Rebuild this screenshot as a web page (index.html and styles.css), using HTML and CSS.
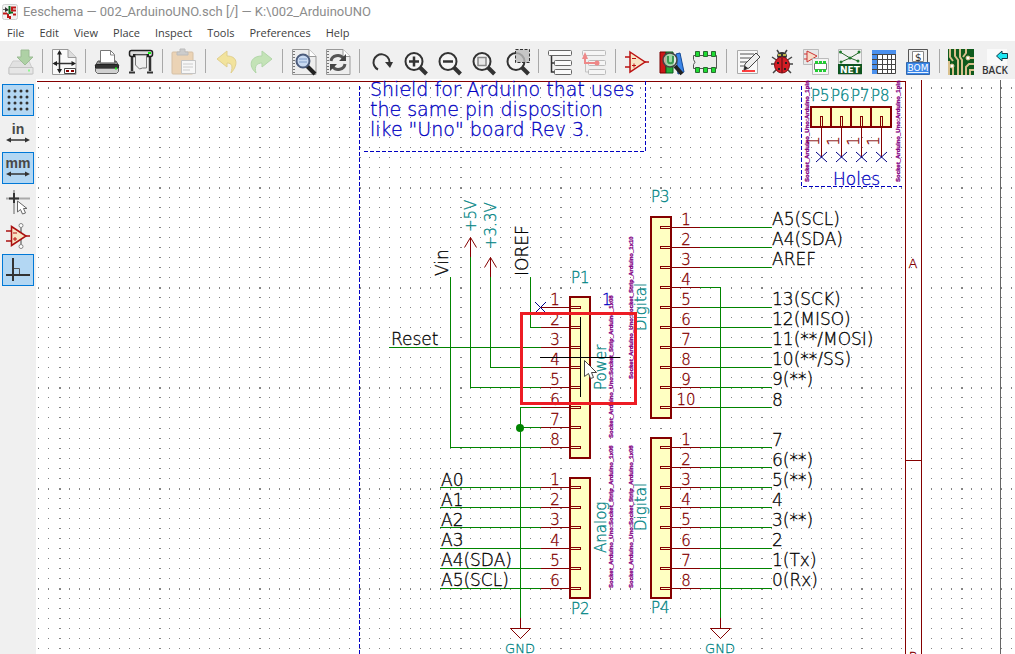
FILE: index.html
```html
<!DOCTYPE html>
<html lang="en">
<head>
<meta charset="utf-8">
<title>Eeschema</title>
<link rel="stylesheet" href="styles.css">
</head>
<body>
<header class="titlebar">
  <svg class="app-icon" viewBox="0 0 16 16" aria-hidden="true">
    <rect x=".5" y=".5" width="15" height="15" rx="2" fill="#f2f2f2" stroke="#d0d0d0"/>
    <path d="M1 5.500h4M4 9.500h2" stroke="#666"/>
    <path d="M3 3l4 3-4 2z" fill="#333"/>
    <path d="M7.500 2v4M7.500 6v4M8 8.500h3" stroke="#0a6a1c" stroke-width="2"/>
    <path d="M14 3.500h-4v3h4M1 9.500h4M6 10v3h3M11 10.500h3M8 12v3" fill="none" stroke="#c01818" stroke-width="2"/>
  </svg>
  <span class="title">Eeschema — 002_ArduinoUNO.sch [/] — K:\002_ArduinoUNO</span>
</header>
<nav class="menubar">
  <button>File</button><button>Edit</button><button>View</button><button>Place</button><button>Inspect</button><button>Tools</button><button>Preferences</button><button>Help</button>
</nav>
<div class="toolbar" role="toolbar">
  <button aria-label="Save" class="off"><svg viewBox="0 0 26 26"><path d="M5 12h16l3 7v6H1v-6z" fill="#d4d4d4" stroke="#aaa"/><path d="M1 18.500h24v6.500H1z" fill="#ddd" stroke="#999"/><path d="M20 21.500h2" stroke="#3f3" stroke-width="2"/><path d="M13 1h8v7h4l-8 8-8-8h4z" fill="#6fb35c" stroke="#4a8a3c"/></svg></button>
  <hr>
  <button aria-label="Page settings"><svg viewBox="0 0 26 26"><path d="M1.500 .5H17l8 8v17H1.500z" fill="#fafafa" stroke="#999"/><path d="M17 .5v8h8" fill="#ddd" stroke="#999"/><path d="M8.500 3v19M3 14.500h20" stroke="#333" stroke-width="1.500"/><path d="M8.500 1L6 5.500h5zM8.500 24.500L6 20h5zM1.500 14.500L6 12v5zM25 14.500L20.500 12v5z" fill="#222"/><path d="M13.500 19.500h11v5h-11z" fill="#fff" stroke="#444"/><path d="M15 22h3M20 22h3" stroke="#800" stroke-width="2"/></svg></button>
  <hr>
  <button aria-label="Print"><svg viewBox="0 0 26 26"><path d="M6.500 13V1.500h10l4 4V13" fill="#fff" stroke="#777"/><path d="M16.500 1v5h4" fill="none" stroke="#888"/><path d="M4 12h2v2h15v-2h1l3 5H1z" fill="#999" stroke="#555"/><rect x="1.500" y="15.500" width="23" height="5" rx="1" fill="#333" stroke="#222"/><path d="M1.500 19.500h23v3l-2 2h-19l-2-2z" fill="#d0d0d0" stroke="#666"/><path d="M21 19.500h2" stroke="#2e2" stroke-width="2"/></svg></button>
  <button aria-label="Plot"><svg viewBox="0 0 26 26"><path d="M4 8v14M22 8v14" stroke="#333" stroke-width="2.500"/><path d="M1 23.500h6M19 23.500h6" stroke="#333" stroke-width="2"/><rect x="1.500" y="1.500" width="23" height="6" rx="2" fill="#ddd" stroke="#222" stroke-width="1.500"/><path d="M5 6h16" stroke="#222" stroke-width="2"/><path d="M20 4h3" stroke="#1e1" stroke-width="2"/><path d="M7.500 6v10l4 4 3-1h4V6z" fill="#eee" stroke="#777"/></svg></button>
  <hr>
  <button aria-label="Paste" class="off"><svg viewBox="0 0 26 26"><rect x="1" y="3" width="21" height="22" rx="1" fill="#e8b77c" stroke="#bd925c"/><path d="M6 6V3h3V0h5v3h3v3z" fill="#aaa" stroke="#888"/><path d="M10.500 11.500h14v13h-14z" fill="#fff" stroke="#999"/><path d="M12 15h10M12 18h10M12 21h7" stroke="#aaa"/></svg></button>
  <hr>
  <button aria-label="Undo" class="off"><svg viewBox="0 0 26 26"><path d="M3 10l10-8v5c10 0 12 8 4 17 2-7 1-10-4-10v4z" fill="#f4d84c" stroke="#d3b02e"/></svg></button>
  <button aria-label="Redo" class="off"><svg viewBox="0 0 26 26"><path d="M24 10L14 2v5C2 7 0 17 8 24c-2-7 1-10 6-10v4z" fill="#9ad880" stroke="#74bd62"/></svg></button>
  <hr>
  <button aria-label="Find"><svg viewBox="0 0 26 26"><path d="M1.500 .5H18l7 7v18H1.500z" fill="#eee" stroke="#999"/><path d="M18 .5v7h7" fill="#fff" stroke="#999"/><path d="M3 2v22" stroke="#777" stroke-dasharray="1 2" stroke-width="2"/><path d="M16 17l8 8" stroke="#222" stroke-width="4"/><circle cx="12" cy="12" r="6.500" fill="#c9daf2" stroke="#4c5c7c" stroke-width="2"/><path d="M8 10h8M8 13h8" stroke="#7e9cc8"/></svg></button>
  <button aria-label="Refresh"><svg viewBox="0 0 26 26"><path d="M1.500 .5H18l7 7v18H1.500z" fill="#eee" stroke="#999"/><path d="M18 .5v7h7" fill="#fff" stroke="#999"/><path d="M3 2v22" stroke="#777" stroke-dasharray="1 2" stroke-width="2"/><path d="M6 12c1-6 9-7 12-3M20 15c-1 6-9 7-12 3" fill="none" stroke="#555" stroke-width="3"/><path d="M21 5v7h-7zM5 22v-7h7z" fill="#444"/></svg></button>
  <hr>
  <button aria-label="Redraw"><svg viewBox="0 0 26 26"><path d="M10 20.500A8 8 0 1 1 21.500 13" fill="none" stroke="#333" stroke-width="2"/><path d="M17 13h8l-3 6z" fill="#333"/></svg></button>
  <button aria-label="Zoom in"><svg viewBox="0 0 26 26"><path d="M17.500 18l7 7" stroke="#333" stroke-width="4"/><circle cx="12" cy="12.500" r="8.500" fill="#f5f5f5" stroke="#333" stroke-width="2"/><path d="M7 12.500h10M12 7.500v10" stroke="#333" stroke-width="2.500"/></svg></button>
  <button aria-label="Zoom out"><svg viewBox="0 0 26 26"><path d="M17.500 18l7 7" stroke="#333" stroke-width="4"/><circle cx="12" cy="12.500" r="8.500" fill="#f5f5f5" stroke="#333" stroke-width="2"/><path d="M7 12.500h10" stroke="#333" stroke-width="2.500"/></svg></button>
  <button aria-label="Zoom to fit"><svg viewBox="0 0 26 26"><path d="M17.500 18l7 7" stroke="#333" stroke-width="4"/><circle cx="12" cy="12.500" r="8.500" fill="#f5f5f5" stroke="#333" stroke-width="2"/><path d="M8 8.500h8v8H8z" fill="#e8e8e8" stroke="#888" stroke-width="1.500"/></svg></button>
  <button aria-label="Zoom to selection"><svg viewBox="0 0 26 26"><path d="M17.500 18l7 7" stroke="#333" stroke-width="4"/><circle cx="12" cy="12.500" r="8.500" fill="#f5f5f5" stroke="#333" stroke-width="2"/><path d="M11.500 .5h14v13h-14z" fill="#bbb" fill-opacity=".8" stroke="#333" stroke-dasharray="3 1.500"/></svg></button>
  <hr>
  <button aria-label="Hierarchy"><svg viewBox="0 0 26 26"><path d="M4.500 7v16H8M4.500 14H8" fill="none" stroke="#333" stroke-width="1.500"/><rect x="1.500" y="1.500" width="23" height="5" rx="1" fill="#fafafa" stroke="#666"/><rect x="7.500" y="11.500" width="17" height="5" rx="1" fill="#fafafa" stroke="#666"/><rect x="7.500" y="20.500" width="17" height="5" rx="1" fill="#fafafa" stroke="#666"/></svg></button>
  <button aria-label="Leave sheet" class="off"><svg viewBox="0 0 26 26"><path d="M4.500 7v16H8M4.500 14H8" fill="none" stroke="#999"/><rect x="1.500" y="1.500" width="23" height="5" rx="1" fill="#fafafa" stroke="#888"/><rect x="7.500" y="11.500" width="17" height="5" rx="1" fill="#fafafa" stroke="#888"/><rect x="7.500" y="20.500" width="17" height="5" rx="1" fill="#fafafa" stroke="#888"/><path d="M4 7v7h11" fill="none" stroke="#e22" stroke-width="2"/><path d="M4 3l-3 7h6z" fill="#e22"/><circle cx="16" cy="14" r="2.500" fill="#e22"/></svg></button>
  <hr>
  <button aria-label="Symbol editor"><svg viewBox="0 0 26 26"><path d="M1 8h5M1 18h5M20 13h5" stroke="#b11" stroke-width="1.500"/><path d="M6 3l15 10L6 23z" fill="#f7e4c4" stroke="#b11" stroke-width="1.500"/><path d="M8 9.500h4M8 16.500h4M10 14.500v4" stroke="#b11"/></svg></button>
  <button aria-label="Symbol libraries"><svg viewBox="0 0 26 26"><path d="M2 3h6v21H2z" fill="#cc1717" stroke="#700"/><path d="M8 3h7v21H8z" fill="#24ad3a" stroke="#0b5a1a"/><path d="M18 5l4-1 4 19-6 2z" fill="#3c86e8" stroke="#124a9a"/><path d="M17 17l7 8" stroke="#222" stroke-width="4"/><circle cx="12" cy="11" r="7" fill="#d8ead8" fill-opacity=".7" stroke="#444" stroke-width="1.500"/><path d="M10 7v5c0 3 5 3 5 0V7" fill="none" stroke="#3a9a50" stroke-width="2"/></svg></button>
  <button aria-label="Footprint editor"><svg viewBox="0 0 26 26"><path d="M1.500 6.500h23v13h-23v-4q3-2 0-5z" fill="#ececec" stroke="#555"/><path d="M3.500 2.500h4v5h-4zM11.500 2.500h4v5h-4zM19.500 2.500h4v5h-4zM3.500 18.500h4v5h-4zM11.500 18.500h4v5h-4zM19.500 18.500h4v5h-4z" fill="#1edb32" stroke="#286b30"/></svg></button>
  <hr>
  <button aria-label="Annotate"><svg viewBox="0 0 26 26"><path d="M2.500 1.500h20v23h-20z" fill="#f8f8f8" stroke="#aaa"/><path d="M5 5h14M5 9h12M5 13h9M5 17h6" stroke="#555"/><path d="M7 22h13" stroke="#f00" stroke-width="1.500"/><path d="M21 4l4 4-11 11-5 2 1-6z" fill="#eee" stroke="#444"/><path d="M9 21l1-4 3 2z" fill="#222"/></svg></button>
  <button aria-label="Electrical rules check"><svg viewBox="0 0 26 26"><path d="M3 8l6 4M2 15h6M4 24l5-5M23 8l-6 4M24 15h-6M22 24l-5-5M10 4L8 1M16 4l2-3" stroke="#444" stroke-width="1.500"/><ellipse cx="13" cy="7" rx="5" ry="4" fill="#333"/><path d="M9 6h3M14 6h3" stroke="#e6dc50" stroke-width="1.500"/><ellipse cx="13" cy="16" rx="7.500" ry="8" fill="#d41d25" stroke="#821016"/><path d="M13 9v15" stroke="#501015"/><path d="M8 13h2v2H8zM16 13h2v2h-2zM9 19h2v2H9zM15 19h2v2h-2z" fill="#222"/></svg></button>
  <button aria-label="Assign footprints"><svg viewBox="0 0 26 26"><path d="M.5 .5h15v15H.5z" fill="#e8e8e8" stroke="#bbb"/><path d="M4 2l10 5-10 6zM1 5h3M1 10h3" fill="#f8dcc8" stroke="#c33"/><path d="M9.500 9.500h16v16h-16z" fill="#f5f5f5" stroke="#bbb"/><path d="M11.500 14.500h12v6h-12z" fill="#fff" stroke="#777"/><path d="M12 12h3v3h-3zM16 12h3v3h-3zM20 12h3v3h-3zM12 20h3v3h-3zM16 20h3v3h-3zM20 20h3v3h-3z" fill="#2c3"/></svg></button>
  <button aria-label="Generate netlist"><svg viewBox="0 0 26 26"><path d="M1.500 .5h23v25h-23z" fill="#f2f2f2" stroke="#bbb"/><path d="M3 3l10 6 10-6M13 9l8 3M13 9l-9 4" stroke="#286b2c" fill="none"/><g fill="#1f7a2c"><circle cx="3.500" cy="3" r="1.500"/><circle cx="22" cy="3" r="1.500"/><circle cx="13" cy="9" r="1.500"/><circle cx="21" cy="12" r="1.500"/><circle cx="4" cy="13" r="1.500"/></g><path d="M1 15h24v10H1z" fill="#0d5520"/><text x="13" y="24" class="badge">NET</text></svg></button>
  <button aria-label="Edit symbol fields"><svg viewBox="0 0 26 26"><path d="M1.500 1.500h23v23h-23z" fill="#fff" stroke="#444"/><path d="M1 1h24v4H1zM1 5h5v20H1z" fill="#4a90ee"/><path d="M1 5.500h24M1 10.500h24M1 15.500h24M1 20.500h24M6.500 5v20M11.500 5v20M16.500 5v20M20.500 5v20" stroke="#444"/></svg></button>
  <button aria-label="Bill of materials"><svg viewBox="0 0 26 26"><path d="M3.500 .5h19v15h-19z" fill="#eee" stroke="#555"/><path d="M7.500 2.500h11v10h-11z" fill="#fff" stroke="#888"/><text x="13" y="12" class="dollar">$</text><path d="M1.500 13.500h23v12h-23z" fill="#3c86e8" stroke="#3268ad"/><text x="13" y="22" class="badge bom">BOM</text></svg></button>
  <hr>
  <button aria-label="Open PCB"><svg viewBox="0 0 26 26"><path d="M0 0h26v26H0z" fill="#0f5a1c"/><path d="M2 0v8l3 4M7 0v7l3 4v15M12 0v8l2 3v15M18 26V18l3-3h5M22 26v-5h4M5 26v-8M18 0v4l-3 4M26 9h-4M1 12v14" fill="none" stroke="#d9c08c" stroke-width="2"/><circle cx="4" cy="17" r="2" fill="#fff" stroke="#d9c08c"/><circle cx="20" cy="9" r="2" fill="#fff" stroke="#d9c08c"/></svg></button>
  <button aria-label="Back"><svg viewBox="0 0 26 26"><path d="M5 0h20v16H5z" fill="#fafafa"/><path d="M14.500 7L20 2v2.500h5.500v5H20V12z" fill="#1ce6f2" stroke="#123a48"/><text x="13" y="25" class="back">BACK</text></svg></button>
</div>
<main class="work">
  <div class="sidebar" role="toolbar">
    <button aria-label="Grid" class="on"><svg viewBox="0 0 26 26"><path d="M4 4h20M4 10h20M4 16h20M4 22h20" stroke="#333" stroke-width="3" stroke-linecap="round" stroke-dasharray="0 6"/></svg></button>
    <button aria-label="Inches"><svg viewBox="0 0 26 26"><text x="13" y="13" class="unit">in</text><path d="M4 19h18" stroke="#333" stroke-width="1.500"/><path d="M1 19l5-2.500v5zM25 19l-5-2.500v5z" fill="#333"/></svg></button>
    <button aria-label="Millimetres" class="on"><svg viewBox="0 0 26 26"><text x="13" y="13" class="unit">mm</text><path d="M4 19h18" stroke="#333" stroke-width="1.500"/><path d="M1 19l5-2.500v5zM25 19l-5-2.500v5z" fill="#333"/></svg></button>
    <button aria-label="Cursor shape"><svg viewBox="0 0 26 26"><path d="M1 9.500h24M9 1v24" stroke="#aaa" stroke-width="2"/><path d="M4 9.500h10M9 4v10" stroke="#333" stroke-width="2"/><path d="M12.500 12v11l3-2.500 2 4.500 3-1-2-4.500h3.500z" fill="#fff" stroke="#666"/></svg></button>
    <button aria-label="Hidden pins"><svg viewBox="0 0 26 26"><path d="M16 3v20" stroke="#999" stroke-width="2"/><circle cx="16" cy="2.500" r="2" fill="#fff" stroke="#888"/><circle cx="16" cy="23.500" r="2" fill="#fff" stroke="#888"/><path d="M1 8h5M1 18h5M20 13h5" stroke="#a11" stroke-width="1.500"/><path d="M6.500 3.500L21 13 6.500 22.500z" fill="#f7e4c4" stroke="#a11" stroke-width="1.500"/><path d="M8 10h4M8 16h4M10 14v4" stroke="#b11"/></svg></button>
    <button aria-label="Right-angle wires" class="on"><svg viewBox="0 0 26 26"><path d="M8 1v23M1 18h24" stroke="#333" stroke-width="2"/><path d="M9 11.500h5.500V17" fill="none" stroke="#555"/></svg></button>
  </div>
  <svg class="canvas" role="img" aria-label="Schematic">
    <g transform="translate(-36 -79)">
      <path id="grid" class="grid"/>
      <g class="crisp">
        <path class="maroon" d="M37 81.500H905.500V2000M921.500 80V2000M905 460.500h17"/>
        <path class="edge" d="M1000.500 80V2000"/>
        <path class="note-line" d="M359.500 86V2000M364 151.500H645.500V81M801.500 86V186.500H902"/>
        <path class="wire" d="M389 347.500H541M450.500 277V447.500H541M470.500 257V387.500H541M490.500 277V367.500H541M530.500 277V327.500H541M541 407.500H520.500V618M520 427.500H541"/>
        <path class="wire" d="M440 487.500H541M440 507.500H541M440 527.500H541M440 548.500H541M440 568.500H541M440 588.500H541"/>
        <path class="wire" d="M700 227.500H772M700 247.500H772M700 267.500H772M700 287.500H720.500V618M700 307.500H772M700 327.500H772M700 347.500H772M700 367.500H772M700 387.500H772M700 407.500H772"/>
        <path class="wire" d="M700 447.500H772M700 467.500H772M700 487.500H772M700 507.500H772M700 527.500H772M700 548.500H772M700 568.500H772M700 588.500H772"/>
      </g>
      <circle cx="520" cy="428" r="4" fill="#008400"/>
      <g class="body crisp">
        <rect x="570" y="297" width="20" height="161"/><rect x="570" y="478" width="20" height="120"/>
        <rect x="651" y="217" width="20" height="201"/><rect x="651" y="438" width="20" height="160"/>
        <rect x="811" y="107" width="20" height="20"/><rect x="831" y="107" width="20" height="20"/><rect x="851" y="107" width="20" height="20"/><rect x="871" y="107" width="20" height="20"/>
      </g>
      <g id="pins" class="pins"></g>
      <path class="maroon" d="M464.500 247.500l6-10 6 10M470.500 237.500V257M484.500 267.500l6-10 6 10M490.500 257.500V277M520.500 618V628.500M510.500 628.500h20l-10 10zM720.500 618V628.500M710.500 628.500h20l-10 10z"/>
      <path class="nc" d="M535 302l11 11M546 302l-11 11M816 152l11 10M827 152l-11 10M836 152l11 10M847 152l-11 10M856 152l11 10M867 152l-11 10M876 152l11 10M887 152l-11 10"/>

      <g class="label note"><text x="370" y="96">Shield for Arduino that uses</text><text x="370" y="116">the same pin disposition</text><text x="370" y="136">like "Uno" board Rev 3.</text></g>
      <text class="label holes" x="833" y="185">Holes</text>
      <g class="label">
        <text x="391" y="345">Reset</text>
        <text x="441" y="486">A0</text><text x="441" y="506">A1</text><text x="441" y="526">A2</text><text x="441" y="546">A3</text><text x="441" y="566">A4(SDA)</text><text x="441" y="586">A5(SCL)</text>
        <text x="772" y="225">A5(SCL)</text><text x="772" y="245">A4(SDA)</text><text x="772" y="265">AREF</text><text x="772" y="305">13(SCK)</text><text x="772" y="325">12(MISO)</text><text x="772" y="345">11(**/MOSI)</text><text x="772" y="365">10(**/SS)</text><text x="772" y="385">9(**)</text><text x="772" y="406">8</text>
        <text x="772" y="446">7</text><text x="772" y="466">6(**)</text><text x="772" y="486">5(**)</text><text x="772" y="506">4</text><text x="772" y="526">3(**)</text><text x="772" y="546">2</text><text x="772" y="566">1(Tx)</text><text x="772" y="586">0(Rx)</text>
        <text transform="translate(448 276) rotate(-90)">Vin</text><text transform="translate(528 276) rotate(-90)">IOREF</text>
      </g>
      <g class="field">
        <text x="571" y="283">P1</text><text x="571" y="614">P2</text><text x="651" y="202">P3</text><text x="651" y="613">P4</text>
        <text x="811" y="101">P5</text><text x="831" y="101">P6</text><text x="851" y="101">P7</text><text x="871" y="101">P8</text>
        <text class="ground" x="520" y="653">GND</text><text class="ground" x="720" y="653">GND</text>
        <text transform="translate(476 232) rotate(-90)">+5V</text><text transform="translate(496 249) rotate(-90)">+3.3V</text>
        <text transform="translate(606 390) rotate(-90)">Power</text><text transform="translate(646 331) rotate(-90)">Digital</text><text transform="translate(606 553) rotate(-90)">Analog</text><text transform="translate(646 531) rotate(-90)">Digital</text>
      </g>
      <g class="footprint">
        <text transform="translate(613 438) rotate(-90)">Socket_Arduino_Uno:Socket_Strip_Arduino_1x08</text>
        <text transform="translate(633 379) rotate(-90)">Socket_Arduino_Uno:Socket_Strip_Arduino_1x10</text>
        <text transform="translate(613 588) rotate(-90)">Socket_Arduino_Uno:Socket_Strip_Arduino_1x06</text>
        <text transform="translate(633 588) rotate(-90)">Socket_Arduino_Uno:Socket_Strip_Arduino_1x08</text>
        <text transform="translate(809 182) rotate(-90)">Socket_Arduino_Uno:Arduino_1pin</text>
        <text transform="translate(900 182) rotate(-90)">Socket_Arduino_Uno:Arduino_1pin</text>
      </g>
      <text class="field one" x="602" y="305">1</text>
      <text class="zone" x="913" y="268">A</text><text class="zone" x="913" y="661">B</text>
      <rect class="highlight" x="521.500" y="313.500" width="114" height="90"/>
      <path class="cross crisp" d="M580.500 317V397M540 357.500H620"/>
      <path class="pointer" d="M584.500 360.500v16l4-3 2 5 3-1-2-5h5z"/>
    </g>
  </svg>
</main>
<script src="schematic.js"></script>
</body>
</html>
```
FILE: styles.css
```css
* { box-sizing: border-box; }
body {
  margin: 0;
  min-height: 100vh;
  display: flex;
  flex-direction: column;
  background: #fff;
  font-family: "Open Sans", "Noto Sans", sans-serif;
  font-size: 12px;
}
button { border: 0; padding: 0; margin: 0; background: none; font: inherit; color: inherit; }
.titlebar { display: flex; align-items: center; gap: 5px; height: 24px; padding-left: 2px; color: #8c8c8c; }
.app-icon { width: 16px; height: 16px; }
.title { font-family: Roboto, sans-serif; font-size: 13px; line-height: 24px; white-space: nowrap; }
.menubar { display: flex; gap: 15px; height: 17px; padding-left: 7px; color: #404040; }
.menubar button { line-height: 17px; font-size: 11px; }
.toolbar { display: flex; height: 38px; padding: 4px 0 0 4px; background: #f0f0f0; flex: none; }
.toolbar button { width: 34px; height: 34px; flex: none; display: grid; place-items: center; }
.toolbar hr { width: 1px; height: 24px; margin: 4px; border: 0; background: #a8a8a8; flex: none; }
.toolbar svg, .sidebar svg { width: 26px; height: 26px; display: block; overflow: visible; }
.off svg { opacity: .5; }
.badge { font: 700 9px "DejaVu Sans", sans-serif; fill: #fff; text-anchor: middle; }
.bom { font-weight: 400; font-size: 9px; text-decoration: underline; }
.dollar { font: 11px "DejaVu Sans Mono", monospace; fill: #333; text-anchor: middle; }
.back { font: 600 10px "Open Sans", sans-serif; fill: #333; text-anchor: middle; }
.unit { font: 700 14px "Liberation Sans", sans-serif; fill: #484848; text-anchor: middle; }

.work { flex: 1; display: flex; min-height: 0; overflow: hidden; }
.sidebar { width: 36px; flex: none; background: #f0f0f0; display: flex; flex-direction: column; gap: 2px; padding: 5px 2px; }
.sidebar button { width: 32px; height: 32px; flex: none; display: grid; place-items: center; border: 1px solid transparent; }
.sidebar .on { background: #b3d7f3; border-color: #0078d7; }
.canvas { flex: 1; min-width: 0; height: auto; overflow: hidden; }

.crisp, .grid, .pins { shape-rendering: crispEdges; }
.grid { fill: #848484; }
.maroon, .pins path { fill: none; stroke: #840000; }
.edge { stroke: #666; }
.note-line { fill: none; stroke: #0000c2; stroke-dasharray: 4 2; }
.wire { fill: none; stroke: #008400; }
.body rect { fill: #ffffc2; stroke: #840000; stroke-width: 2; }
.nc { stroke: #000084; }
.label, .field, .pins, .zone { font-family: "DejaVu Sans", sans-serif; font-weight: 200; }
.label text, text.label, .field text, text.field, .pins text, .zone, .footprint { stroke-width: .3px; }
.label { font-size: 17px; fill: #000; stroke: #000; }
.note { font-size: 19px; }
.note, .holes { fill: #0000c2; stroke: #0000c2; }
.field, .pins { font-size: 15px; }
.field { fill: #008484; stroke: #008484; }
.ground { font-size: 13px; text-anchor: middle; }
.one { fill: #0000c2; stroke: #0000c2; }
.pins text { fill: #840000; stroke: #840000; text-anchor: middle; }
.zone { font-size: 13px; fill: #840000; stroke: #840000; text-anchor: middle; }
.footprint { font: 700 6px "Liberation Sans", sans-serif; fill: #840084; stroke: #840084; }
.highlight { fill: none; stroke: #ed1c24; stroke-width: 3; }
.cross { stroke: #000; }
.pointer { fill: #fff; stroke: #444; }
```
FILE: schematic.js
```js
const PITCH = 10.03;
function drawGrid() {
  let d = '';
  for (let j = 0; 87 + j * PITCH < innerHeight; j++) {
    for (let i = -2; 59 + i * PITCH < innerWidth; i++) {
      const x = Math.round(58.5 + i * PITCH), y = Math.round(86.500 + j * PITCH);
      const w = i % 10 ? 1 : 2, h = j % 10 ? 1 : 2;
      d += `M${x} ${y}h${w}v${h}h-${w}z`;
    }
  }
  document.getElementById('grid').setAttribute('d', d);
}

const upper = [307, 327, 347, 367, 387, 407, 427, 447];
const lower = [487, 507, 527, 548, 568, 588];
const connectors = [
  { side: 'left', rows: upper },
  { side: 'left', rows: lower },
  { side: 'right', rows: [227, 247, 267, 287, 307, 327, 347, 367, 387, 407] },
  { side: 'right', rows: [447, 467, ...lower] }
];
let out = '';
for (const { side, rows } of connectors) {
  rows.forEach((y, i) => {
    const left = side === 'left';
    out += left
      ? `<path d="M541 ${y}.5H570M570.5 ${y - 1}.5h10v2h-10z"/>`
      : `<path d="M672 ${y}.5H700M660.5 ${y - 1}.5h10v2h-10z"/>`;
    out += `<text x="${left ? 555 : 686}" y="${y - 2}">${i + 1}</text>`;
  });
}
for (const x of [821, 841, 861, 881]) {
  out += `<path d="M${x}.5 128V157M${x - 1}.5 127V116.5h2V127"/>`;
  out += `<text transform="translate(${x - 2} 141) rotate(-90)">1</text>`;
}
document.getElementById('pins').innerHTML = out;
drawGrid();
addEventListener('resize', drawGrid);
```
